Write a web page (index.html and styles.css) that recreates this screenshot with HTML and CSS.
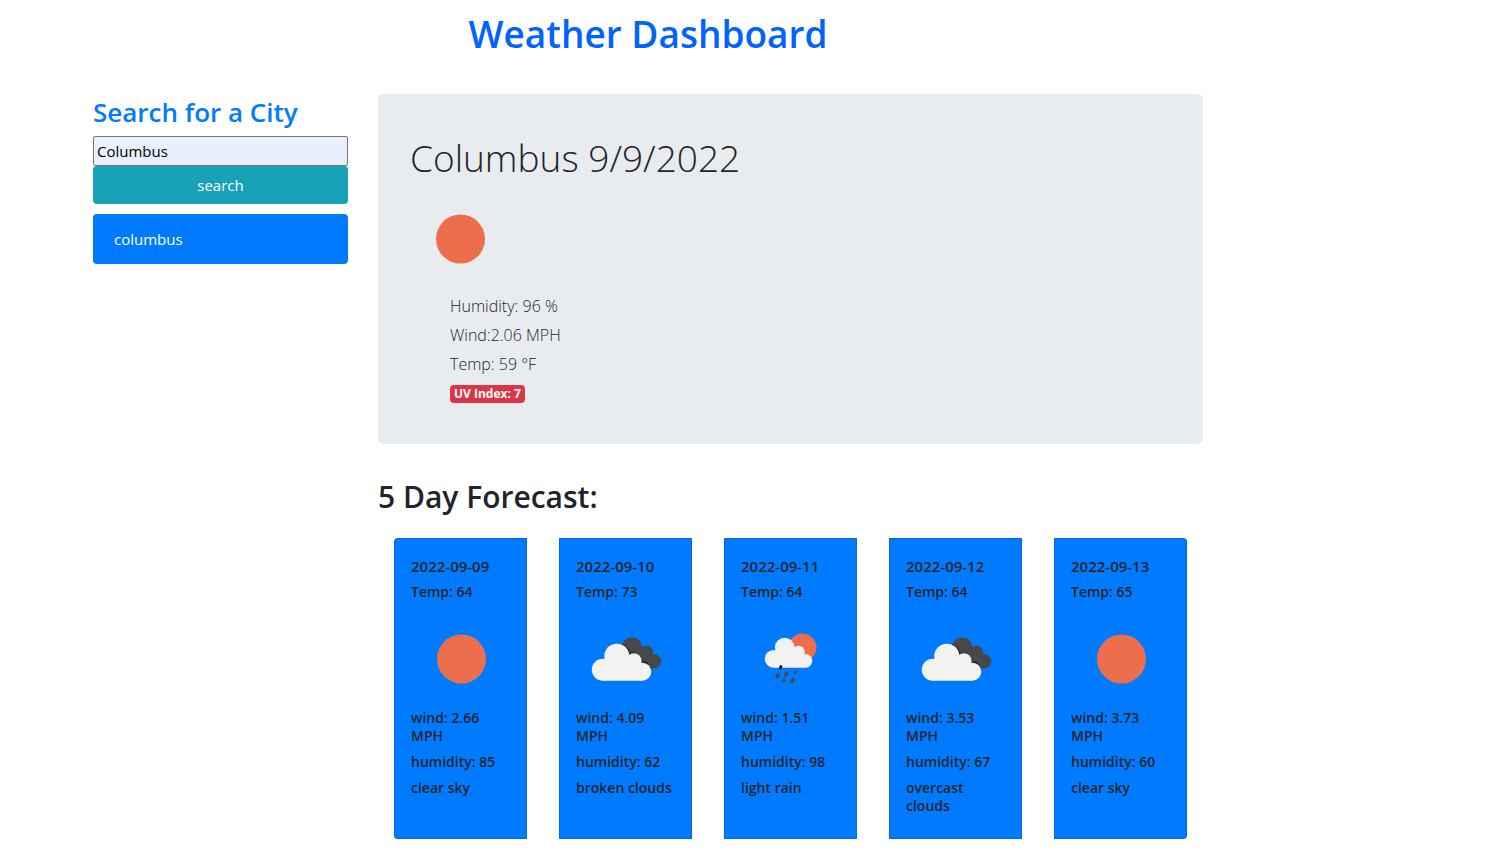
FILE: index.html
```html
<!DOCTYPE html>
<html lang="en">
<head>
<meta charset="utf-8">
<meta name="viewport" content="width=device-width, initial-scale=1">
<title>Weather Dashboard</title>
<link rel="stylesheet" href="styles.css">
</head>
<body>
<svg class="symbols" aria-hidden="true">
  <symbol id="sun" viewBox="0 0 100 100"><circle cx="50.5" cy="50" r="24.5" fill="#ec6e4c"/></symbol>
  <symbol id="clouds" viewBox="0 0 100 100">
    <g fill="#48484a"><circle cx="56" cy="38.5" r="10.2"/><circle cx="70.7" cy="43" r="6.4"/><circle cx="78" cy="52.3" r="7.3"/><path d="M56 38h15l7 14v7.600H60z"/></g>
    <path d="M46.500 34.800Q53 38 54.300 43.700 63 41.500 66.700 51.500 73 52 75.500 59.500L66 64 45 48z" fill="#2b2b2d"/>
    <g fill="#f2f2f0"><circle cx="26.800" cy="60.700" r="11"/><circle cx="40.800" cy="47.200" r="12.500"/><circle cx="58" cy="52" r="7.700"/><circle cx="66.300" cy="62.700" r="9"/><path d="M27 58 36 50h22l8 8v13.700H27z"/></g>
  </symbol>
  <symbol id="rain" viewBox="0 0 100 100">
    <circle cx="61.500" cy="38.600" r="14" fill="#ec6e4c"/>
    <g fill="#f2f2f2"><circle cx="32.600" cy="49.800" r="8.900"/><circle cx="43.700" cy="38.500" r="9.800"/><circle cx="57.500" cy="43" r="6.200"/><circle cx="64.400" cy="51.800" r="6.900"/><path d="M32 48 38 40h20l6 8v10.700H32z"/></g>
    <g stroke="#48484a" stroke-width="3" stroke-linecap="round"><path d="m39.400 58.800.5-1.200" stroke="#222"/><path d="m36 68.200 1.400-2.800M44.300 66.900l1.400-3M54 63.500l.6-1M42.700 72.200l.6-1M50.700 73l1.400-2.600"/></g>
  </symbol>
</svg>
<div class="container">
  <h1 class="page-title">Weather Dashboard</h1>
  <div class="row">
    <aside class="sidebar">
      <form>
        <label class="search-label" for="city">Search for a City</label>
        <input class="search-input" id="city" type="text" value="Columbus">
        <button class="search-button" type="button">search</button>
      </form>
      <ul class="history">
        <li><button class="history-item" type="button">columbus</button></li>
      </ul>
    </aside>
    <main class="main">
      <section class="current">
        <h2 class="current-title">Columbus 9/9/2022</h2>
        <svg class="icon" role="img" aria-label="clear sky"><use href="#sun"/></svg>
        <ul class="current-list">
          <li>Humidity: 96 %</li>
          <li>Wind:2.06 MPH</li>
          <li>Temp: 59 °F</li>
          <li><span class="badge">UV Index: 7</span></li>
        </ul>
      </section>
      <h2 class="forecast-title">5 Day Forecast:</h2>
      <section class="cards">
        <article class="card">
          <h3>2022-09-09</h3><p>Temp: 64</p>
          <svg class="icon" aria-hidden="true"><use href="#sun"/></svg>
          <p>wind: 2.66 MPH</p><p>humidity: 85</p><p>clear sky</p>
        </article>
        <article class="card">
          <h3>2022-09-10</h3><p>Temp: 73</p>
          <svg class="icon" aria-hidden="true"><use href="#clouds"/></svg>
          <p>wind: 4.09 MPH</p><p>humidity: 62</p><p>broken clouds</p>
        </article>
        <article class="card">
          <h3>2022-09-11</h3><p>Temp: 64</p>
          <svg class="icon" aria-hidden="true"><use href="#rain"/></svg>
          <p>wind: 1.51 MPH</p><p>humidity: 98</p><p>light rain</p>
        </article>
        <article class="card">
          <h3>2022-09-12</h3><p>Temp: 64</p>
          <svg class="icon" aria-hidden="true"><use href="#clouds"/></svg>
          <p>wind: 3.53 MPH</p><p>humidity: 67</p><p>overcast clouds</p>
        </article>
        <article class="card">
          <h3>2022-09-13</h3><p>Temp: 65</p>
          <svg class="icon" aria-hidden="true"><use href="#sun"/></svg>
          <p>wind: 3.73 MPH</p><p>humidity: 60</p><p>clear sky</p>
        </article>
      </section>
    </main>
  </div>
</div>
</body>
</html>
```
FILE: styles.css
```css
*, *::before, *::after { box-sizing: border-box; }
body {
  margin: 0;
  background: #fff;
  color: #212529;
  font-family: "Open Sans", "Noto Sans", sans-serif;
  font-size: 15px;
  line-height: 24px;
}
h1, h2, h3, p, ul { margin: 0; padding: 0; }
ul { list-style: none; }
button, input { font: inherit; }
.symbols { display: none; }
.container { max-width: 1140px; margin-left: 78px; }
.page-title {
  padding: 10px 15px 36px;
  color: #0062ff;
  font-size: 37px;
  font-weight: 600;
  line-height: 48px;
  text-align: center;
}
.row { display: grid; grid-template-columns: 1fr 3fr; }
.sidebar, .main { min-width: 0; padding: 0 15px; }
.search-label {
  display: block;
  padding: 1px 0 7px;
  color: #007bff;
  font-size: 26px;
  font-weight: 600;
  line-height: 34px;
}
.search-input {
  display: block;
  width: 100%;
  height: 30px;
  padding: 1px 3px;
  border: 1px solid #767676;
  border-radius: 2px;
  background: #e8f0fe;
  color: #000;
}
.search-button {
  display: block;
  width: 100%;
  height: 38px;
  padding: 0 12px;
  border: 0;
  border-radius: 4px;
  background: #17a2b8;
  color: #fff;
}
.history { padding-top: 10px; }
.history-item {
  display: block;
  width: 100%;
  height: 50px;
  padding: 0 21px;
  border: 0;
  border-radius: 4px;
  background: #007bff;
  color: #fff;
  text-align: left;
}
.current {
  padding: 40px 32px;
  border-radius: 5px;
  background: #e9ecef;
}
.current-title {
  padding-bottom: 7px;
  font-size: 37px;
  font-weight: 300;
  line-height: 48px;
}
.icon { display: block; width: 100px; height: 100px; }
.current-list {
  padding: 5px 0 1px 40px;
  font-size: 16px;
  font-weight: 300;
}
.current-list li { padding-bottom: 5px; }
.current-list li:last-child { display: flex; padding: 4px 0 0; }
.badge {
  padding: 0 4px;
  border-radius: 4px;
  background: #dc3545;
  color: #fff;
  font-size: 12px;
  font-weight: 700;
  line-height: 18px;
}
.forecast-title {
  padding: 33px 0 21px;
  font-size: 30px;
  font-weight: 600;
  line-height: 40px;
}
.cards { display: flex; }
.card {
  flex: 1 1 0;
  min-width: 0;
  margin: 0 16px;
  padding: 18px 16px 15px;
  border: 1px solid rgba(0, 0, 0, 0.125);
  background: #007bff;
  font-size: 14px;
  font-weight: 600;
  line-height: 18px;
}
.card:first-child { border-radius: 4px 0 0 4px; }
.card:last-child { border-radius: 0 4px 4px 0; }
.card h3 {
  font-size: 15px;
  font-weight: 600;
}
.card h3, .card p { padding-bottom: 8px; }
```
